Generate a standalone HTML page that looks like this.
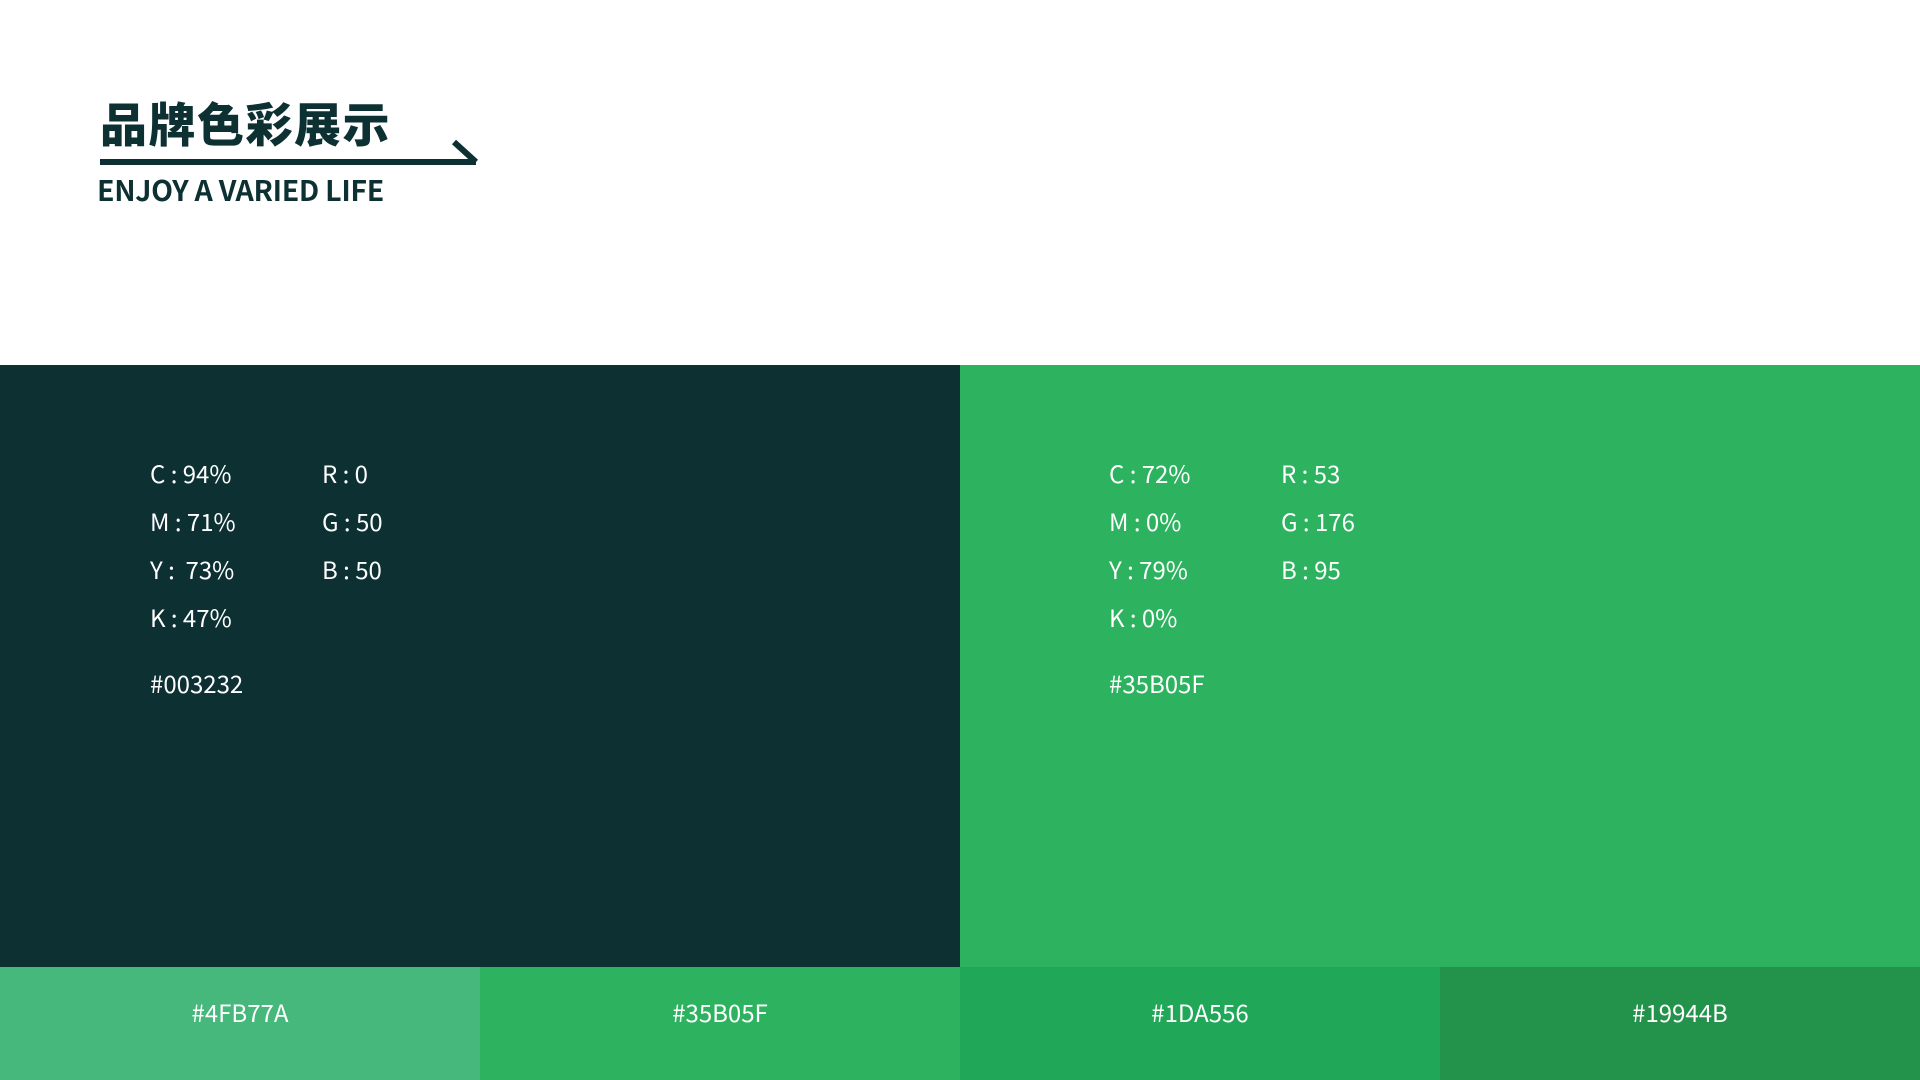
<!DOCTYPE html>
<html><head><meta charset="utf-8"><style>
*{margin:0;padding:0;box-sizing:border-box}
body{width:1920px;height:1080px;position:relative;background:#fff;overflow:hidden;font-family:"Liberation Sans","Noto Sans CJK SC",sans-serif}
.t{position:absolute;left:100px;top:92px;font-size:47px;font-weight:900;color:#0d3033;letter-spacing:1.5px;font-family:"Noto Sans CJK SC",sans-serif;line-height:60px}
.s{position:absolute;left:97px;top:172px;font-size:28.5px;font-weight:bold;color:#0d3033;font-family:"Noto Sans CJK SC","Liberation Sans",sans-serif;line-height:36px;letter-spacing:-0.3px}
.p{position:absolute;top:365px;height:602px;width:960px}
.x{position:absolute;color:#fff;font-size:24px;font-family:"Noto Sans CJK SC","Liberation Sans",sans-serif;line-height:30px}
.b{position:absolute;top:967px;height:113px;width:480px;color:#fff;font-size:24px;text-align:center;line-height:90px;font-family:"Noto Sans CJK SC","Liberation Sans",sans-serif}
</style></head><body>
<div class="t">品牌色彩展示</div>
<svg style="position:absolute;left:0;top:0" width="500" height="200"><rect x="100" y="159" width="376" height="6" fill="#0d3033"/><line x1="454" y1="142" x2="476" y2="162" stroke="#0d3033" stroke-width="6"/></svg>
<div class="s">ENJOY A VARIED LIFE</div>
<div class="p" style="left:0;background:#0d3033"></div>
<div class="p" style="left:960px;background:#2db35f"></div>
<div class="x" style="left:150px;top:458px">C : 94%<br><span style="display:block;margin-top:18px">M : 71%</span><span style="display:block;margin-top:18px">Y :&nbsp; 73%</span><span style="display:block;margin-top:18px">K : 47%</span><span style="display:block;margin-top:36px">#003232</span></div>
<div class="x" style="left:322px;top:458px">R : 0<br><span style="display:block;margin-top:18px">G : 50</span><span style="display:block;margin-top:18px">B : 50</span></div>
<div class="x" style="left:1109px;top:458px">C : 72%<br><span style="display:block;margin-top:18px">M : 0%</span><span style="display:block;margin-top:18px">Y : 79%</span><span style="display:block;margin-top:18px">K : 0%</span><span style="display:block;margin-top:36px">#35B05F</span></div>
<div class="x" style="left:1281px;top:458px">R : 53<br><span style="display:block;margin-top:18px">G : 176</span><span style="display:block;margin-top:18px">B : 95</span></div>
<div class="b" style="left:0;background:#47b87b">#4FB77A</div>
<div class="b" style="left:480px;background:#2db35f">#35B05F</div>
<div class="b" style="left:960px;background:#20a757">#1DA556</div>
<div class="b" style="left:1440px;background:#23924a">#19944B</div>
</body></html>
